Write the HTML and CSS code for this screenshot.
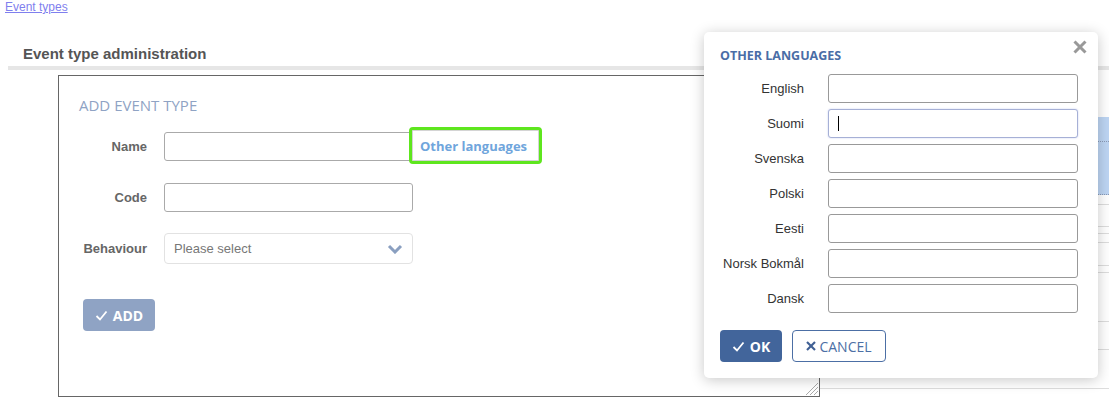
FILE: index.html
```html
<!DOCTYPE html>
<html lang="en">
<head>
    <meta charset="UTF-8">
    <meta name="viewport" content="width=device-width, initial-scale=1.0">
    <title>Event type administration</title>
    <link rel="stylesheet" href="styles.css">
</head>
<body>
    <a href="#" class="crumb">Event types</a>
    <h1 class="page-title">Event type administration</h1>
    <div class="title-bar"></div>

    <div class="content">
        <div class="box">
            <h2 class="box-title">ADD EVENT TYPE</h2>
            <div class="form-row">
                <label class="form-label">Name</label>
                <input type="text" class="text-input">
                <a href="#" class="other-link">Other languages</a>
            </div>
            <div class="form-row">
                <label class="form-label">Code</label>
                <input type="text" class="text-input">
            </div>
            <div class="form-row select-row">
                <label class="form-label">Behaviour</label>
                <div class="select-box">
                    <span>Please select</span>
                    <svg class="chevron" width="16" height="10" viewBox="0 0 16 10"><polyline points="2,2 8,8 14,2" fill="none" stroke="#8a9fc0" stroke-width="3"/></svg>
                </div>
            </div>
            <button class="add-btn">
                <svg width="13" height="11" viewBox="0 0 13 11"><polyline points="1.5,6 5,9.5 11.5,1.5" fill="none" stroke="#fff" stroke-width="1.8"/></svg>
                ADD
            </button>
            <svg class="resize-handle" width="15" height="15" viewBox="0 0 15 15">
                <line x1="15" y1="3" x2="3" y2="15" stroke="#aaa"/>
                <line x1="15" y1="7" x2="7" y2="15" stroke="#aaa"/>
                <line x1="15" y1="11" x2="11" y2="15" stroke="#aaa"/>
            </svg>
        </div>
        <div class="panel">
            <div class="panel-gap"></div>
            <div class="panel-selected">
                <div class="sel-top"></div>
            </div>
            <div class="panel-row" style="height:9px"></div>
            <div class="panel-row" style="height:21px"></div>
            <div class="panel-row" style="height:6px"></div>
            <div class="panel-row" style="height:8px"></div>
            <div class="panel-row" style="height:22px"></div>
            <div class="panel-row" style="height:6px"></div>
            <div class="panel-row" style="height:48px"></div>
            <div class="panel-row" style="height:27px"></div>
            <div class="panel-row" style="height:38px"></div>
        </div>
    </div>

    <div class="modal">
        <svg class="close-btn" width="14" height="14" viewBox="0 0 14 14">
            <line x1="1.5" y1="1.5" x2="12.5" y2="12.5" stroke="#999" stroke-width="3"/>
            <line x1="12.5" y1="1.5" x2="1.5" y2="12.5" stroke="#999" stroke-width="3"/>
        </svg>
        <h3 class="modal-title">OTHER LANGUAGES</h3>
        <div class="lang-list">
            <div class="lang-row"><label class="lang-label">English</label><input type="text" class="lang-input"></div>
            <div class="lang-row"><label class="lang-label">Suomi</label>
                <div class="focus-wrap"><input type="text" class="lang-input focused"><span class="caret"></span></div>
            </div>
            <div class="lang-row"><label class="lang-label">Svenska</label><input type="text" class="lang-input"></div>
            <div class="lang-row"><label class="lang-label">Polski</label><input type="text" class="lang-input"></div>
            <div class="lang-row"><label class="lang-label">Eesti</label><input type="text" class="lang-input"></div>
            <div class="lang-row"><label class="lang-label">Norsk Bokmål</label><input type="text" class="lang-input"></div>
            <div class="lang-row"><label class="lang-label">Dansk</label><input type="text" class="lang-input"></div>
        </div>
        <div class="modal-buttons">
            <button class="ok-btn">
                <svg width="13" height="11" viewBox="0 0 13 11"><polyline points="1.5,6 5,9.5 11.5,1.5" fill="none" stroke="#fff" stroke-width="1.8"/></svg>
                OK
            </button>
            <button class="cancel-btn">
                <svg width="10" height="10" viewBox="0 0 10 10">
                    <line x1="1" y1="1" x2="9" y2="9" stroke="#3f5f94" stroke-width="2.2"/>
                    <line x1="9" y1="1" x2="1" y2="9" stroke="#3f5f94" stroke-width="2.2"/>
                </svg>CANCEL
            </button>
        </div>
    </div>
</body>
</html>
```

FILE: styles.css
```css
body {
    margin: 0;
    font-family: 'Liberation Sans', Arial, sans-serif;
    background-color: #fff;
    color: #333;
    position: relative;
    width: 1109px;
    height: 401px;
    overflow: hidden;
}
.crumb {
    display: block;
    padding: 0 0 0 5px;
    font-size: 12px;
    line-height: 14px;
    height: 14px;
    color: #7f7fee;
    text-decoration: underline;
    width: max-content;
}
.page-title {
    margin: 30px 0 0 0;
    padding-left: 23px;
    font-size: 15px;
    line-height: 20px;
    font-weight: bold;
    color: #555;
}
.title-bar {
    margin: 2px 0 0 8px;
    height: 4px;
    background-color: #e6e6e6;
}
.content {
    display: flex;
}
.box {
    position: relative;
    box-sizing: border-box;
    margin: 5px 0 0 58px;
    width: 762px;
    height: 322px;
    border: 1px solid #666;
    padding: 18px 0 0 20px;
}
.box-title {
    margin: 0;
    font-family: 'Open Sans', sans-serif;
    font-weight: 500;
    font-size: 15px;
    line-height: 22px;
    color: #8fa3c4;
}
.form-row {
    display: flex;
    align-items: center;
    height: 29px;
    margin-top: 22px;
}
.form-row:first-of-type {
    margin-top: 16px;
}
.select-row {
    height: 31px;
    margin-top: 21px;
}
.form-label {
    width: 68px;
    margin-right: 17px;
    text-align: right;
    font-size: 13px;
    font-weight: bold;
    color: #666;
}
.text-input {
    box-sizing: border-box;
    width: 249px;
    height: 29px;
    border: 1px solid #aaa;
    border-radius: 3px;
    margin: 0;
    background: #fff;
}
.other-link {
    box-sizing: border-box;
    margin: -2px 0 0 -4px;
    height: 37px;
    width: 133px;
    display: flex;
    align-items: center;
    padding-left: 8px;
    border: 3px solid #5ee61e;
    border-radius: 4px;
    box-shadow: inset 0 0 0 1px #d4d4d4;
    background: #fff;
    font-family: 'Open Sans', sans-serif;
    font-size: 13px;
    font-weight: bold;
    color: #6fa5dc;
    text-decoration: none;
}
.select-box {
    box-sizing: border-box;
    width: 249px;
    height: 31px;
    border: 1px solid #e2e2e2;
    border-radius: 4px;
    display: flex;
    align-items: center;
    justify-content: space-between;
    padding: 0 9px 0 9px;
    font-size: 13px;
    color: #777;
}
.add-btn {
    margin: 35px 0 0 4px;
    width: 72px;
    height: 32px;
    border: none;
    border-radius: 4px;
    background-color: #8fa3c4;
    color: #fff;
    font-family: 'Open Sans', sans-serif;
    font-size: 14px;
    font-weight: bold;
    display: flex;
    align-items: center;
    justify-content: center;
    gap: 5px;
    padding: 0;
}
.resize-handle {
    position: absolute;
    right: 1px;
    bottom: 1px;
}
.panel {
    flex: 1;
}
.panel-gap {
    height: 47px;
}
.panel-selected {
    height: 78px;
    background-color: #bdd5f3;
    box-sizing: border-box;
    border-bottom: 1px dotted #8a9ab5;
}
.sel-top {
    height: 24px;
    border-bottom: 1px dotted #8a9ab5;
}
.panel-row {
    border-bottom: 1px solid #ddd;
}
.modal {
    position: absolute;
    left: 704px;
    top: 32px;
    width: 394px;
    height: 346px;
    box-sizing: border-box;
    padding: 14px 16px 0 16px;
    background: #fff;
    border-radius: 5px;
    box-shadow: 0 2px 14px rgba(0,0,0,0.22);
}
.close-btn {
    position: absolute;
    top: 8px;
    right: 11px;
}
.modal-title {
    margin: 0;
    font-family: 'Open Sans', sans-serif;
    font-size: 12.5px;
    line-height: 20px;
    font-weight: bold;
    color: #4a6da6;
}
.lang-list {
    margin-top: 8px;
    display: flex;
    flex-direction: column;
    gap: 6px;
}
.lang-row {
    display: flex;
    align-items: center;
    height: 29px;
}
.lang-label {
    width: 84px;
    margin-right: 24px;
    text-align: right;
    font-size: 13px;
    color: #333;
}
.lang-input {
    box-sizing: border-box;
    width: 250px;
    height: 29px;
    margin: 0;
    border: 1px solid #999;
    border-radius: 3px;
    background: #fff;
}
.focus-wrap {
    position: relative;
    height: 29px;
}
.lang-input.focused {
    border-color: #a6b0d6;
    box-shadow: 0 0 2px #c6cff0;
}
.caret {
    position: absolute;
    left: 10px;
    top: 7px;
    width: 1px;
    height: 15px;
    background: #000;
}
.modal-buttons {
    display: flex;
    gap: 10px;
    margin-top: 17px;
}
.ok-btn, .cancel-btn {
    height: 32px;
    border-radius: 4px;
    font-family: 'Open Sans', sans-serif;
    font-size: 14px;
    display: flex;
    align-items: center;
    justify-content: center;
    padding: 0;
}
.ok-btn {
    width: 62px;
    border: none;
    background-color: #42659b;
    color: #fff;
    font-weight: bold;
    gap: 5px;
}
.cancel-btn {
    width: 94px;
    border: 1px solid #4c6fa5;
    background: #fff;
    color: #4c6fa5;
    gap: 3px;
}
```
